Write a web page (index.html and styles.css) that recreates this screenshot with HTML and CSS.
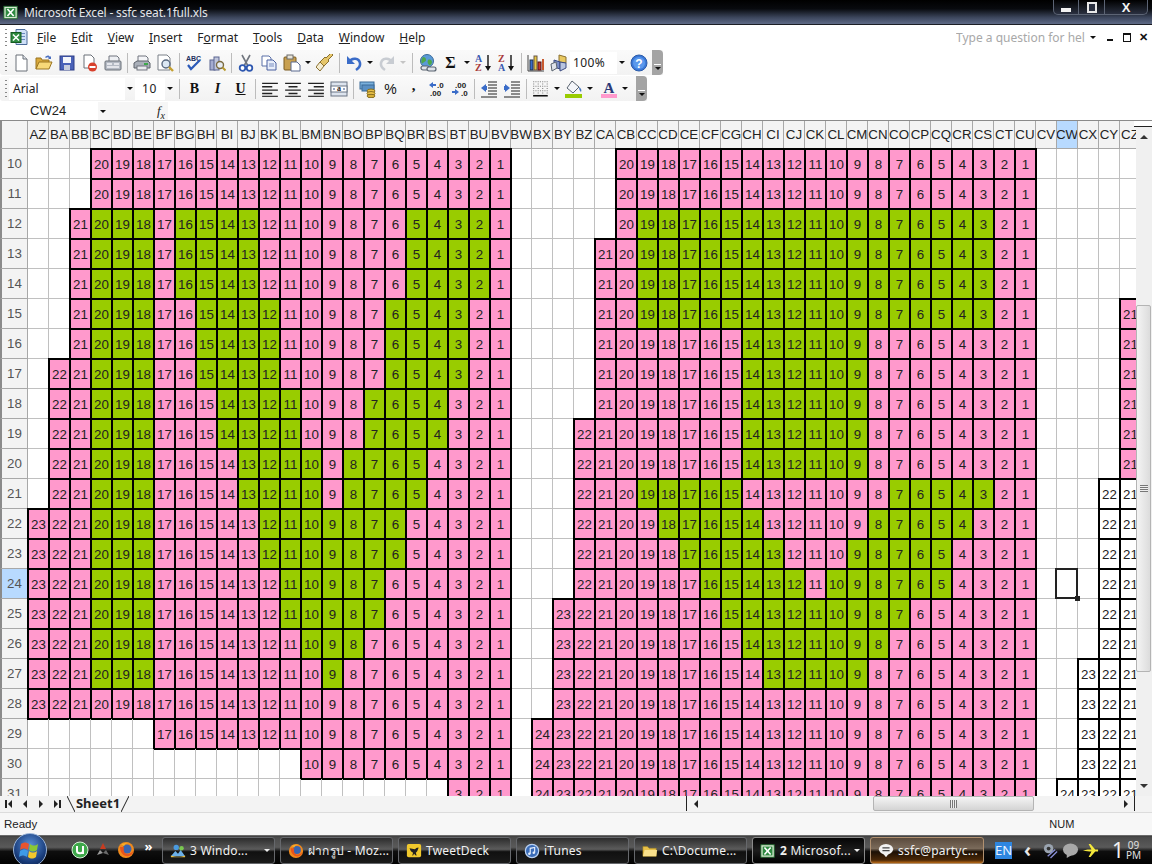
FILE: index.html
```html
<!DOCTYPE html>
<html lang="en">
<head>
<meta charset="utf-8">
<title>Microsoft Excel - ssfc seat.1full.xls</title>
<link rel="stylesheet" href="styles.css">
</head>
<body>
<svg class="sprite" xmlns="http://www.w3.org/2000/svg">
  <symbol id="i-new" viewBox="0 0 18 18"><path d="M4 1h7l4 4v12H4z" fill="#fff" stroke="#6a7078"/><path d="M11 1v4h4" fill="#dfe3ea" stroke="#6a7078"/></symbol>
  <symbol id="i-open" viewBox="0 0 18 18"><path d="M1 15V4h5l1 2h7v2" fill="#d9a93c" stroke="#9a7420"/><path d="M1 15l3-7h13l-3 7z" fill="#f8d878" stroke="#9a7420"/><path d="M10 3c2-2 4-2 5 0l1-1v3h-3l1-1c-1-1-2-1-3 0z" fill="#4a6fc0"/></symbol>
  <symbol id="i-save" viewBox="0 0 18 18"><rect x="2" y="2" width="14" height="14" fill="#4a62b8" stroke="#2c3c86"/><rect x="5" y="3" width="8" height="6" fill="#f4f6fb"/><rect x="6" y="11" width="6" height="5" fill="#c8cede"/></symbol>
  <symbol id="i-perm" viewBox="0 0 18 18"><path d="M3 1h7l3 3v10H3z" fill="#fff" stroke="#6a7078"/><circle cx="11.5" cy="13" r="4.5" fill="#d8402c"/><rect x="8.5" y="12" width="6" height="2" fill="#fff"/></symbol>
  <symbol id="i-mail" viewBox="0 0 18 18"><path d="M5 7V2h8l2 2v3" fill="#eef0f4" stroke="#70757e"/><rect x="1" y="7" width="16" height="9" rx="1" fill="#b4bac4" stroke="#6a7078"/><path d="M3 10h5M3 13h12M10 10h5" stroke="#f2f4f8" stroke-width="1.5"/></symbol>
  <symbol id="i-print" viewBox="0 0 18 18"><path d="M5 8V2h8l2 2v4" fill="#f4f5f8" stroke="#70757e"/><path d="M1 9l3-2h11l2 2v5H1z" fill="#aab0ba" stroke="#5a6068"/><rect x="4" y="12" width="10" height="4" fill="#e8eaee" stroke="#70757e"/><rect x="11" y="9" width="4" height="2" fill="#3da84a"/></symbol>
  <symbol id="i-preview" viewBox="0 0 18 18"><path d="M2 1h9l3 3v12H2z" fill="#fff" stroke="#7a8088"/><circle cx="10" cy="10" r="4" fill="#dce8f4" stroke="#5a6a80" stroke-width="1.4"/><path d="M13 13l4 4" stroke="#c4a030" stroke-width="2.4"/></symbol>
  <symbol id="i-spell" viewBox="0 0 18 18"><text x="1" y="7" class="svg-tiny">ABC</text><path d="M3 11l3 4 9-9" fill="none" stroke="#2c5ab8" stroke-width="2.2"/></symbol>
  <symbol id="i-research" viewBox="0 0 18 18"><rect x="2" y="6" width="5" height="10" fill="#a4acd0" stroke="#5a6490"/><rect x="6" y="3" width="5" height="13" fill="#c0c6dc" stroke="#5a6490"/><circle cx="12" cy="11" r="3.5" fill="#e6ecf4" stroke="#7a6a40" stroke-width="1.4"/><path d="M14.5 13.5l3 3" stroke="#b89a30" stroke-width="2"/></symbol>
  <symbol id="i-cut" viewBox="0 0 18 18"><path d="M5 1l6 11M13 1L7 12" stroke="#70757e" stroke-width="1.6" fill="none"/><circle cx="5.5" cy="14" r="2.8" fill="#fff" stroke="#2e58b0" stroke-width="1.8"/><circle cx="12.5" cy="14" r="2.8" fill="#fff" stroke="#2e58b0" stroke-width="1.8"/></symbol>
  <symbol id="i-copy" viewBox="0 0 18 18"><path d="M2 2h7l2 2v8H2z" fill="#fff" stroke="#5a70a8"/><path d="M7 6h6l3 3v7H7z" fill="#e8eefa" stroke="#4a60a0"/><path d="M9 10h5M9 12h5" stroke="#7a8ec0"/></symbol>
  <symbol id="i-paste" viewBox="0 0 18 18"><rect x="1" y="3" width="12" height="13" rx="1" fill="#c8a050" stroke="#7a5a20"/><rect x="4" y="1" width="6" height="4" fill="#e8e4d8" stroke="#6a6a6a"/><path d="M8 8h6l3 3v6H8z" fill="#fff" stroke="#5a6a90"/></symbol>
  <symbol id="i-painter" viewBox="0 0 18 18"><path d="M17 1l-5 5 1 1-5 5-4-4 5-5 1 1 5-5z" fill="#e6c66a" stroke="#8a7030"/><path d="M4 8l4 4-4 5-4-4z" fill="#f4ecd0" stroke="#8a7030"/></symbol>
  <symbol id="i-undo" viewBox="0 0 18 18"><path d="M4 8c3-5 10-4 11 1 .6 3-1 5-4 7" fill="none" stroke="#3a6cc8" stroke-width="2.6"/><path d="M2 2v8h8z" fill="#3a6cc8"/></symbol>
  <symbol id="i-redo" viewBox="0 0 18 18"><path d="M14 8c-3-5-10-4-11 1-.6 3 1 5 4 7" fill="none" stroke="#c8ccd2" stroke-width="2.6"/><path d="M16 2v8H8z" fill="#c8ccd2"/></symbol>
  <symbol id="i-link" viewBox="0 0 18 18"><circle cx="8" cy="7" r="6.5" fill="#5a9ad8" stroke="#3a6a98"/><path d="M4 3c2 0 3 1 3 3s-3 2-4 4c-1-2-1-5 1-7zM9 6c2-1 4 0 4 2s-2 4-3 3-2-3-1-5z" fill="#4ea84a"/><rect x="2" y="12" width="8" height="4" rx="2" fill="#dfe3ea" stroke="#5a6470" stroke-width="1.2"/><rect x="8" y="13" width="9" height="4" rx="2" fill="#dfe3ea" stroke="#5a6470" stroke-width="1.2"/></symbol>
  <symbol id="i-az" viewBox="0 0 18 18"><text x="0" y="8" class="svg-sort svg-blue">A</text><text x="0" y="17" class="svg-sort svg-red">Z</text><path d="M13 1v14" stroke="#111" stroke-width="1.4"/><path d="M10 12h6l-3 5z" fill="#111"/></symbol>
  <symbol id="i-za" viewBox="0 0 18 18"><text x="0" y="8" class="svg-sort svg-red">Z</text><text x="0" y="17" class="svg-sort svg-blue">A</text><path d="M13 1v14" stroke="#111" stroke-width="1.4"/><path d="M10 12h6l-3 5z" fill="#111"/></symbol>
  <symbol id="i-chart" viewBox="0 0 18 18"><path d="M1 1v16h16" fill="none" stroke="#444"/><rect x="3" y="6" width="3" height="10" fill="#3a6cc8" stroke="#234"/><rect x="7" y="2" width="3" height="14" fill="#e8c840" stroke="#654"/><rect x="11" y="8" width="3" height="8" fill="#c83a30" stroke="#511"/><rect x="15" y="5" width="2" height="11" fill="#c85a30"/></symbol>
  <symbol id="i-draw" viewBox="0 0 18 18"><path d="M9 1l7 2v6l-7-1z" fill="#e8c860" stroke="#8a7030"/><path d="M4 6l6 2v7l-6-2z" fill="#7a8ec8" stroke="#3a4a80"/><path d="M1 10l5-2 1 6-5 3z" fill="#dfe3ea" stroke="#5a6470"/><path d="M10 8l6 1v5l-6 3z" fill="#b8c4e0" stroke="#3a4a80"/></symbol>
  <symbol id="i-help" viewBox="0 0 18 18"><circle cx="9" cy="9" r="8" fill="#3a78d8" stroke="#2a5aa8"/><circle cx="9" cy="9" r="6" fill="#5a98ec"/><text x="9" y="13.5" class="svg-help">?</text></symbol>
  <symbol id="i-al" viewBox="0 0 16 16"><path d="M1 3h14M1 6h9M1 9h14M1 12h9" stroke="#222" stroke-width="1.2"/><path d="M1 14.5h14" stroke="#222"/></symbol>
  <symbol id="i-ac" viewBox="0 0 16 16"><path d="M1 3h14M4 6h8M1 9h14M4 12h8" stroke="#222" stroke-width="1.2"/><path d="M1 14.5h14" stroke="#222"/></symbol>
  <symbol id="i-ar" viewBox="0 0 16 16"><path d="M1 3h14M6 6h9M1 9h14M6 12h9" stroke="#222" stroke-width="1.2"/><path d="M1 14.5h14" stroke="#222"/></symbol>
  <symbol id="i-merge" viewBox="0 0 18 18"><rect x="1" y="2" width="16" height="14" fill="#dde4ee" stroke="#6a7484"/><rect x="1" y="6" width="16" height="6" fill="#fff" stroke="#6a7484"/><text x="9" y="11" class="svg-merge">a</text><path d="M3 9h2M13 9h2" stroke="#2c4a88"/></symbol>
  <symbol id="i-money" viewBox="0 0 18 18"><rect x="1" y="2" width="14" height="7" fill="#7ab0dc" stroke="#3a6a98"/><rect x="3" y="5" width="12" height="6" fill="#5a90c4" stroke="#3a6a98"/><ellipse cx="12" cy="11" rx="4" ry="2" fill="#e8c048" stroke="#8a7020"/><ellipse cx="12" cy="13.5" rx="4" ry="2" fill="#e8c048" stroke="#8a7020"/><ellipse cx="12" cy="16" rx="4" ry="1.7" fill="#d8b038" stroke="#8a7020"/></symbol>
  <symbol id="i-inc" viewBox="0 0 18 18"><path d="M1 5l4-3v2h3v2H5v2z" fill="#3a6cc8"/><text x="9" y="8" class="svg-tiny2">.0</text><text x="2" y="16" class="svg-tiny2">.00</text></symbol>
  <symbol id="i-dec" viewBox="0 0 18 18"><text x="4" y="8" class="svg-tiny2">.00</text><path d="M1 11h3V9l4 3-4 3v-2H1z" fill="#3a6cc8"/><text x="10" y="16" class="svg-tiny2">.0</text></symbol>
  <symbol id="i-out" viewBox="0 0 18 18"><path d="M8 2h9M8 5h9M8 8h9M8 11h9M8 14h9M1 17h16" stroke="#222" stroke-width="1.1"/><path d="M1 8l5-4v2h1v4H6v2z" fill="#3a6cc8"/></symbol>
  <symbol id="i-ind" viewBox="0 0 18 18"><path d="M8 2h9M8 5h9M8 8h9M8 11h9M8 14h9M1 17h16" stroke="#222" stroke-width="1.1"/><path d="M7 8L2 4v2H1v4h1v2z" fill="#3a6cc8"/></symbol>
  <symbol id="i-border" viewBox="0 0 16 16"><path d="M1.5 1v11M5.5 1v11M9.5 1v11M13.5 1v11M1 1.5h13M1 5.500h13M1 9.500h13" stroke="#888" stroke-dasharray="1 1" fill="none"/><path d="M1 14h13" stroke="#111" stroke-width="1.4"/></symbol>
  <symbol id="i-fill" viewBox="0 0 18 18"><path d="M7 1l7 6-6 6-6-5z" fill="#f4f6fa" stroke="#5a6470"/><path d="M14 7c2 1 3 3 2 5-1-1-2-2-2-5z" fill="#4a78c0"/><rect x="0" y="14" width="17" height="4" fill="#99cc00"/></symbol>
  <symbol id="i-color" viewBox="0 0 18 18"><text x="9" y="12.500" class="svg-a">A</text><rect x="1" y="14" width="16" height="4" fill="#ff99cc"/></symbol>
  <symbol id="i-xl" viewBox="0 0 18 18"><rect x="1" y="2" width="15" height="14" fill="#d6e8d0" stroke="#1e6a2c"/><rect x="3" y="4" width="11" height="10" fill="#2e8a40"/><path d="M5 5l7 8M12 5l-7 8" stroke="#fff" stroke-width="1.8"/></symbol>
  <symbol id="i-xldoc" viewBox="0 0 18 18"><path d="M6 1h9l2 2v13H6z" fill="#cfe0f8" stroke="#4a6a98"/><path d="M9 5h6M9 8h6M9 11h6" stroke="#6a8ac0"/><rect x="1" y="4" width="10" height="10" fill="#2e8a40" stroke="#155a22"/><path d="M3 6l6 6M9 6l-6 6" stroke="#fff" stroke-width="1.6"/></symbol>
  <symbol id="i-win" viewBox="0 0 24 24"><path d="M3 6c3-2 5-2 8 0l-1 6c-3-2-5-2-8 0z" fill="#e8542e"/><path d="M12 6c3 2 5 2 8 0l-1 6c-3 2-5 2-8 0z" fill="#8ac834"/><path d="M2 13c3-2 5-2 8 0l-1 6c-3-2-5-2-8 0z" fill="#3e9ae8"/><path d="M11 13c3 2 5 2 8 0l-1 6c-3 2-5 2-8 0z" fill="#f4c82c"/></symbol>
  <symbol id="i-ut" viewBox="0 0 18 18"><circle cx="9" cy="9" r="8" fill="#3ea84a" stroke="#d8f0d8"/><path d="M6 5v5c0 3 6 3 6 0V5M12 5v8" fill="none" stroke="#fff" stroke-width="2"/></symbol>
  <symbol id="i-aim" viewBox="0 0 18 18"><path d="M9 2l3 6h-6z" fill="#c83c20"/><path d="M3 14l3-5 3 3z" fill="#9a9a9a"/><path d="M15 14l-3-5-3 3z" fill="#6a6a6a"/></symbol>
  <symbol id="i-fx" viewBox="0 0 18 18"><circle cx="9" cy="9" r="8" fill="#f08a1c"/><circle cx="10" cy="8" r="4.500" fill="#3a64b0"/><path d="M3 6c0 6 4 10 9 9 3-1 4-3 4-5-2 3-6 4-8 2-2-2-1-5-1-6z" fill="#e8541c"/><path d="M4 3c2 0 5-2 8-1-3 0-4 1-5 3z" fill="#f6b02c"/></symbol>
  <symbol id="i-group" viewBox="0 0 18 18"><path d="M1 15l5-6 3 3 3-4 5 7z" fill="#6cb0e8"/><path d="M1 16h16v-2c-4 2-11 2-16 0z" fill="#e8c048"/><circle cx="7" cy="5" r="3" fill="#4a9ae0"/><circle cx="13" cy="6" r="2.500" fill="#7ac850"/></symbol>
  <symbol id="i-tweet" viewBox="0 0 18 18"><rect x="1" y="1" width="16" height="15" rx="2" fill="#f0c82c"/><path d="M14 5c-2 0-3 1-4 2L4 6c1 3 2 4 4 5l-1 3h1l1-2 2 2h1l-1-3c2-1 2-3 3-5z" fill="#222"/></symbol>
  <symbol id="i-tunes" viewBox="0 0 18 18"><circle cx="9" cy="9" r="7.500" fill="#3a6cb8" stroke="#b8d0f0" stroke-width="1.4"/><path d="M7 12V6l5-1v6" fill="none" stroke="#e4eefc" stroke-width="1.3"/><circle cx="6" cy="12" r="1.400" fill="#e4eefc"/><circle cx="11" cy="11" r="1.400" fill="#e4eefc"/></symbol>
  <symbol id="i-folder" viewBox="0 0 18 18"><path d="M1 15V4h5l2 2h8v9z" fill="#e8c048" stroke="#9a8020" stroke-width=".6"/><path d="M1 15l2-7h14l-1 7z" fill="#f8e08c"/></symbol>
  <symbol id="i-chat" viewBox="0 0 18 18"><ellipse cx="9" cy="7" rx="8" ry="6" fill="#f2f2f2"/><path d="M6 12l3 4 3-4z" fill="#f2f2f2"/><path d="M5 5.500h8M5 8.500h8" stroke="#444" stroke-width="1.400"/></symbol>
  <symbol id="i-vol" viewBox="0 0 18 18"><circle cx="7" cy="7" r="5" fill="#9aa4b0"/><circle cx="7" cy="7" r="2" fill="#333"/><path d="M6 15l8-7M9 17l7-7" stroke="#8a90d8" stroke-width="1.400"/></symbol>
  <symbol id="i-bubble" viewBox="0 0 18 18"><ellipse cx="9" cy="8" rx="8" ry="6.500" fill="#a8a8a8"/><path d="M5 12v5l5-3z" fill="#a8a8a8"/></symbol>
  <symbol id="i-plane" viewBox="0 0 18 18"><path d="M1 9c4-1 6-1 9-1l-3-6h2l5 6h3v2h-3l-5 6H7l3-6c-3 0-5 0-9-1z" fill="#f4e83c"/></symbol>
</svg>

<div class="app">
  <header class="titlebar">
    <svg class="ico-title"><use href="#i-xl"/></svg>
    <span class="title-text">Microsoft Excel - ssfc seat.1full.xls</span>
    <div class="wincontrols">
      <span class="winbtn winbtn-min"><i class="min-glyph"></i></span>
      <span class="winbtn winbtn-max"><i class="max-glyph"></i></span>
      <span class="winbtn winbtn-close">X</span>
    </div>
  </header>

  <nav class="menubar">
    <span class="grip"></span>
    <svg class="ico-menu"><use href="#i-xldoc"/></svg>
    <ul class="menu">
      <li><u>F</u>ile</li><li><u>E</u>dit</li><li><u>V</u>iew</li><li><u>I</u>nsert</li><li>F<u>o</u>rmat</li><li><u>T</u>ools</li><li><u>D</u>ata</li><li><u>W</u>indow</li><li><u>H</u>elp</li>
    </ul>
    <span class="askbox">Type a question for help</span>
    <span class="arr arr-ask"></span>
    <span class="mdi mdi-min"></span>
    <span class="mdi mdi-restore"><i></i></span>
    <span class="mdi mdi-close">✕</span>
  </nav>

  <div class="toolbar">
    <span class="grip"></span>
    <span class="btn"><svg class="ico"><use href="#i-new"/></svg></span>
    <span class="btn"><svg class="ico"><use href="#i-open"/></svg></span>
    <span class="btn"><svg class="ico"><use href="#i-save"/></svg></span>
    <span class="btn"><svg class="ico"><use href="#i-perm"/></svg></span>
    <span class="btn"><svg class="ico"><use href="#i-mail"/></svg></span>
    <span class="sep"></span>
    <span class="btn"><svg class="ico"><use href="#i-print"/></svg></span>
    <span class="btn"><svg class="ico"><use href="#i-preview"/></svg></span>
    <span class="sep"></span>
    <span class="btn"><svg class="ico"><use href="#i-spell"/></svg></span>
    <span class="btn"><svg class="ico"><use href="#i-research"/></svg></span>
    <span class="sep"></span>
    <span class="btn"><svg class="ico"><use href="#i-cut"/></svg></span>
    <span class="btn"><svg class="ico"><use href="#i-copy"/></svg></span>
    <span class="btn"><svg class="ico"><use href="#i-paste"/></svg></span>
    <span class="arr"></span>
    <span class="btn"><svg class="ico"><use href="#i-painter"/></svg></span>
    <span class="sep"></span>
    <span class="btn"><svg class="ico"><use href="#i-undo"/></svg></span>
    <span class="arr"></span>
    <span class="btn"><svg class="ico"><use href="#i-redo"/></svg></span>
    <span class="arr arr-off"></span>
    <span class="sep sep-wide"></span>
    <span class="btn"><svg class="ico"><use href="#i-link"/></svg></span>
    <span class="btn btn-sigma">Σ</span>
    <span class="arr"></span>
    <span class="btn"><svg class="ico"><use href="#i-az"/></svg></span>
    <span class="btn"><svg class="ico"><use href="#i-za"/></svg></span>
    <span class="sep"></span>
    <span class="btn"><svg class="ico"><use href="#i-chart"/></svg></span>
    <span class="btn"><svg class="ico"><use href="#i-draw"/></svg></span>
    <span class="combo combo-zoom">100%</span>
    <span class="arr"></span>
    <span class="btn"><svg class="ico"><use href="#i-help"/></svg></span>
    <span class="tb-end"><i></i></span>
  </div>

  <div class="toolbar">
    <span class="grip"></span>
    <span class="combo combo-font">Arial</span>
    <span class="arr"></span>
    <span class="combo combo-size">10</span>
    <span class="arr"></span>
    <span class="sep sep-wide"></span>
    <span class="btn btn-b">B</span>
    <span class="btn btn-i">I</span>
    <span class="btn btn-u">U</span>
    <span class="sep"></span>
    <span class="btn"><svg class="ico"><use href="#i-al"/></svg></span>
    <span class="btn"><svg class="ico"><use href="#i-ac"/></svg></span>
    <span class="btn"><svg class="ico"><use href="#i-ar"/></svg></span>
    <span class="btn"><svg class="ico"><use href="#i-merge"/></svg></span>
    <span class="sep"></span>
    <span class="btn"><svg class="ico"><use href="#i-money"/></svg></span>
    <span class="btn btn-pct">%</span>
    <span class="btn btn-comma">,</span>
    <span class="btn"><svg class="ico"><use href="#i-inc"/></svg></span>
    <span class="btn"><svg class="ico"><use href="#i-dec"/></svg></span>
    <span class="sep"></span>
    <span class="btn"><svg class="ico"><use href="#i-out"/></svg></span>
    <span class="btn"><svg class="ico"><use href="#i-ind"/></svg></span>
    <span class="sep"></span>
    <span class="btn"><svg class="ico"><use href="#i-border"/></svg></span>
    <span class="arr"></span>
    <span class="btn"><svg class="ico"><use href="#i-fill"/></svg></span>
    <span class="arr"></span>
    <span class="btn btn-shift"><svg class="ico"><use href="#i-color"/></svg></span>
    <span class="arr"></span>
    <span class="tb-end tb-end-tight"><i></i></span>
  </div>

  <div class="formulabar">
    <span class="namebox">CW24</span>
    <span class="arr arr-name"></span>
    <span class="fx">f<sub>x</sub></span>
    <span class="formula-input"></span>
  </div>

  <main class="sheet">
    <div class="grid" id="grid"></div>
    <aside class="vscroll">
      <span class="sb-cap"></span>
      <span class="sb-arrow"><i class="tri tri-up"></i></span>
      <span class="sb-gap"></span>
      <span class="sb-thumb"><i class="grip-h"></i></span>
      <span class="sb-rest"></span>
      <span class="sb-arrow"><i class="tri tri-down"></i></span>
    </aside>
  </main>

  <div class="tabbar">
    <div class="tabnav">
      <span class="tabnav-btn"><i class="bar"></i><i class="tri tri-left"></i></span>
      <span class="tabnav-btn"><i class="tri tri-left"></i></span>
      <span class="tabnav-btn"><i class="tri tri-right"></i></span>
      <span class="tabnav-btn"><i class="tri tri-right"></i><i class="bar"></i></span>
    </div>
    <div class="tab">
      <svg class="tab-slant"><path d="M0 0l8 16" stroke="#222" fill="none"/></svg>
      <span class="tab-name">Sheet1</span>
      <svg class="tab-slant"><path d="M8 0l-8 16" stroke="#222" fill="none"/></svg>
    </div>
    <div class="hscroll">
      <span class="hs-arrow"><i class="tri tri-left"></i></span>
      <span class="hs-gap"></span>
      <span class="hs-thumb"><i class="grip-v"></i></span>
      <span class="hs-rest"></span>
      <span class="hs-arrow"><i class="tri tri-right"></i></span>
    </div>
  </div>

  <div class="statusbar">
    <span>Ready</span>
    <span class="status-num">NUM</span>
  </div>

  <footer class="taskbar">
    <div class="start"><span class="orb"><svg class="orb-flag"><use href="#i-win"/></svg></span></div>
    <div class="quick">
      <span class="ql"><svg class="ico"><use href="#i-ut"/></svg></span>
      <span class="ql"><svg class="ico"><use href="#i-aim"/></svg></span>
      <span class="ql"><svg class="ico"><use href="#i-fx"/></svg></span>
      <span class="ql ql-more">»</span>
    </div>
    <div class="tasks">
      <div class="task"><svg class="ico-task"><use href="#i-group"/></svg><span class="task-label">3 Windo...</span><i class="tri tri-white"></i></div>
      <div class="task"><svg class="ico-task"><use href="#i-fx"/></svg><span class="task-label">ฝากรูป - Moz...</span></div>
      <div class="task"><svg class="ico-task"><use href="#i-tweet"/></svg><span class="task-label">TweetDeck</span></div>
      <div class="task"><svg class="ico-task"><use href="#i-tunes"/></svg><span class="task-label">iTunes</span></div>
      <div class="task"><svg class="ico-task"><use href="#i-folder"/></svg><span class="task-label">C:\Docume...</span></div>
      <div class="task task-active"><svg class="ico-task"><use href="#i-xl"/></svg><span class="task-label"><b>2</b> Microsof...</span><i class="tri tri-white"></i></div>
      <div class="task task-flash"><svg class="ico-task"><use href="#i-chat"/></svg><span class="task-label">ssfc@partyc...</span></div>
    </div>
    <div class="tray">
      <span class="lang">EN</span>
      <span class="tray-chev">‹</span>
      <svg class="ico-tray"><use href="#i-vol"/></svg>
      <svg class="ico-tray"><use href="#i-bubble"/></svg>
      <svg class="ico-tray"><use href="#i-plane"/></svg>
      <div class="clock"><span class="clock-h">1</span><span class="clock-rest"><span>09</span><span>PM</span></span></div>
    </div>
  </footer>
</div>
<script src="grid.js"></script>
</body>
</html>
```
FILE: styles.css
```css
* { box-sizing: border-box; }
html, body { margin: 0; padding: 0; }
body { width: 1152px; height: 864px; overflow: hidden; background: #fff; font-family: "Liberation Sans", Arial, sans-serif; }
.sprite { display: none; }
.app { display: flex; flex-direction: column; width: 1152px; height: 864px; }
i { display: block; font-style: normal; }

.svg-tiny { font: bold 7px "Liberation Sans", sans-serif; fill: #223060; }
.svg-tiny2 { font: bold 8px "Liberation Sans", sans-serif; fill: #222; }
.svg-sort { font: bold 10px "Liberation Serif", serif; }
.svg-blue { fill: #3a5ab0; }
.svg-red { fill: #a83a3a; }
.svg-help { font: bold 12px "Liberation Sans", sans-serif; fill: #fff; text-anchor: middle; }
.svg-merge { font: bold 8px "Liberation Serif", serif; fill: #222; text-anchor: middle; }
.svg-a { font: bold 15px "Liberation Serif", serif; fill: #2c3a78; text-anchor: middle; }

/* title bar */
.titlebar { flex: 0 0 25px; display: flex; align-items: center; padding-left: 3px; position: relative; background: linear-gradient(#000 0, #080a0e 35%, #3c465c 70%, #5e6a86 96%, #1c1e24 96%); }
.ico-title { width: 16px; height: 17px; flex: none; }
.title-text { margin-left: 5px; color: #e4e6ea; font: 12px "Noto Sans", sans-serif; letter-spacing: -.15px; white-space: nowrap; }
.wincontrols { display: flex; margin-left: auto; margin-right: 4px; align-self: flex-start; height: 15px; border: 1px solid #5c6474; border-top: 0; border-radius: 0 0 5px 5px; background: linear-gradient(#000, #2a3040); }
.winbtn { display: flex; align-items: center; justify-content: center; color: #f2f2f2; border-right: 1px solid #5c6474; font: bold 13px "Liberation Sans", sans-serif; }
.winbtn:last-child { border-right: 0; }
.winbtn-min { width: 25px; }
.winbtn-max { width: 26px; }
.winbtn-close { width: 42px; }
.min-glyph { width: 10px; height: 4px; margin-top: 5px; background: #f2f2f2; }
.max-glyph { width: 10px; height: 11px; border: 2px solid #e8e8e8; background: #2a3040; }

/* menu */
.menubar { flex: 0 0 25px; display: flex; align-items: center; background: #fff; position: relative; }
.grip { flex: none; width: 5px; height: 18px; margin-left: 4px; background: repeating-linear-gradient(#888 0 1px, transparent 1px 4px); background-size: 2px 100%; background-repeat: no-repeat; background-position: 1px 0; }
.ico-menu { width: 18px; height: 19px; margin-left: 1px; flex: none; }
.menu { list-style: none; display: flex; gap: 15px; margin: 0 0 0 9px; padding: 0; font: 12px "Noto Sans", sans-serif; color: #222; flex: 1; }
.askbox { width: 129px; overflow: hidden; white-space: nowrap; color: #a8a8a8; font: 12px "Noto Sans", sans-serif; }
.arr-ask { margin-left: 3px; }
.mdi { flex: none; width: 17px; text-align: center; color: #111; font-size: 11px; }
.mdi-min::before { content: ""; display: block; width: 6px; height: 2px; margin: 8px auto 0; background: #111; }
.mdi-min { height: 14px; margin-left: 3px; }
.mdi-restore { display: flex; justify-content: center; }
.mdi-restore i { width: 8px; height: 9px; border: 1px solid #111; border-top-width: 2px; }
.mdi-close { font-weight: bold; margin-right: 0; }

/* toolbars */
.toolbar { flex: 0 0 25px; display: flex; align-items: center; width: max-content; margin-bottom: 1px; background: linear-gradient(#fafafa, #f2f2f2); border-radius: 3px 0 0 3px; }
.btn { flex: none; width: 23px; height: 22px; display: flex; align-items: center; justify-content: center; color: #111; }
.ico { width: 18px; height: 18px; display: block; }
.arr { flex: none; width: 10px; height: 22px; display: flex; align-items: center; justify-content: center; }
.arr::before { content: ""; border-left: 3px solid transparent; border-right: 3px solid transparent; border-top: 3px solid #111; }
.arr-off::before { border-top-color: #c4c4c4; }
.sep { flex: none; width: 6px; height: 20px; background: linear-gradient(#bcbcbc, #bcbcbc) center / 1px 100% no-repeat; }
.sep-wide { width: 8px; }
.combo { flex: none; height: 22px; display: flex; align-items: center; background: #fff; color: #222; font: 12px "Noto Sans", sans-serif; }
.combo-zoom { width: 47px; padding-left: 3px; letter-spacing: .4px; }
.combo-font { width: 116px; padding-left: 4px; }
.combo-size { width: 30px; padding-left: 7px; letter-spacing: .6px; }
.btn-sigma { font: bold 16px "Liberation Serif", serif; }
.btn-b { font: bold 14px "Liberation Serif", serif; }
.btn-i { font: italic bold 14px "Liberation Serif", serif; }
.btn-u { font: bold 14px "Liberation Serif", serif; text-decoration: underline; }
.btn-pct { font: 14px "Liberation Sans", sans-serif; }
.btn-comma { font: bold 15px "Liberation Serif", serif; padding-bottom: 6px; }
.btn-shift { margin-left: 2px; }
.tb-end { flex: none; width: 11px; height: 25px; margin-left: 2px; border-radius: 0 4px 4px 0; background: #a4a4a4; display: flex; flex-direction: column; align-items: center; justify-content: flex-end; padding-bottom: 4px; }
.tb-end-tight { margin-left: 6px; }
.tb-end i { width: 7px; height: 7px; border-top: 1px solid #fff; }
.tb-end i::after { content: ""; display: block; margin: 2px auto 0; width: 0; border-left: 3px solid transparent; border-right: 3px solid transparent; border-top: 3px solid #111; }

/* formula bar */
.formulabar { flex: 0 0 18px; display: flex; align-items: stretch; background: #f6f6f6; }
.namebox { flex: none; width: 98px; padding-left: 30px; background: #fff; color: #222; font-size: 13px; line-height: 18px; }
.arr-name { height: 18px; width: 10px; margin-left: 0; }
.fx { flex: none; width: 60px; text-align: right; padding-right: 3px; font: italic 13px/18px "Liberation Serif", serif; color: #222; }
.fx sub { font-size: 10px; line-height: 0; }
.formula-input { flex: 1; background: #fff; }

/* sheet */
.sheet { flex: 1; display: flex; min-height: 0; border-top: 1px solid #8a8a8a; }
.grid { flex: none; width: 1136px; overflow: hidden; display: grid; grid-template-columns: 28px repeat(53, 21px); grid-auto-rows: 30px; grid-template-rows: 28px; align-content: start; background: #fff; }
.head { display: flex; align-items: center; justify-content: center; white-space: nowrap; overflow: hidden; background: #f3f3f3; color: #222; font-size: 13.33px; border-right: 1px solid #a8a8a8; border-bottom: 1px solid #a8a8a8; }
.head-row { color: #555; border-left: 2px solid #8a8a8a; font-size: 13.33px; }
.head-corner { border-left: 2px solid #8a8a8a; }
.head-on { background: #b8daff; }
.cell { display: flex; align-items: center; justify-content: center; color: #222; font-size: 13.33px; border-right: 1px solid #c0c0c0; border-bottom: 1px solid #c0c0c0; min-width: 0; position: relative; }
.seat { border: 0; box-shadow: inset 0 0 0 1px #000, 0 0 0 1px #000; }
.pink { background: #ff99cc; }
.green { background: #99cc00; }
.plain { background: #fff; }
.selected::after { content: ""; box-sizing: border-box; position: absolute; left: -2px; top: -1px; width: 23px; height: 31px; border: 2px solid #222; pointer-events: none; z-index: 2; }
.selected::before { content: ""; box-sizing: border-box; position: absolute; right: -3px; bottom: -3px; width: 5px; height: 5px; background: #222; z-index: 3; }

/* scrollbars */
.vscroll { flex: 1; display: flex; flex-direction: column; background: #f0f0f0; }
.sb-cap { flex: 0 0 6px; background: #fff; border-bottom: 1px solid #222; margin-left: -2px; }
.sb-arrow { flex: 0 0 20px; display: flex; align-items: center; justify-content: center; }
.sb-gap { flex: 0 0 158px; }
.sb-thumb { flex: 0 0 367px; margin-right: 1px; border: 1px solid #b4b4b4; border-radius: 2px; background: linear-gradient(90deg, #f4f4f4, #dcdcdc); display: flex; align-items: center; justify-content: center; }
.sb-rest { flex: 1; }
.tri { width: 0; height: 0; }
.tri-up { border-left: 4px solid transparent; border-right: 4px solid transparent; border-bottom: 4px solid #333; }
.tri-down { border-left: 4px solid transparent; border-right: 4px solid transparent; border-top: 4px solid #333; }
.tri-left { border-top: 4px solid transparent; border-bottom: 4px solid transparent; border-right: 4px solid #222; }
.tri-right { border-top: 4px solid transparent; border-bottom: 4px solid transparent; border-left: 4px solid #222; }
.tri-white { margin-left: auto; margin-right: 4px; flex: none; border-left: 3px solid transparent; border-right: 3px solid transparent; border-top: 3px solid #eee; }
.grip-h { width: 8px; height: 7px; background: repeating-linear-gradient(#777 0 1px, #eee 1px 2px); }
.grip-v { width: 7px; height: 8px; background: repeating-linear-gradient(90deg, #777 0 1px, #eee 1px 2px); }

/* tabs */
.tabbar { flex: 0 0 16px; display: flex; align-items: stretch; background: #f3f3f3; border-bottom: 1px solid #dcdcdc; position: relative; }
.tabnav { flex: none; display: flex; width: 67px; }
.tabnav-btn { flex: 0 0 16.500px; display: flex; align-items: center; justify-content: center; gap: 1px; }
.bar { width: 2px; height: 8px; background: #222; }
.tab { flex: none; display: flex; width: 62px; height: 16px; }
.tab-slant { width: 8px; height: 16px; flex: none; }
.tab-name { width: 46px; text-align: center; font: bold 13px/15px "Noto Sans", sans-serif; color: #222; }
.hscroll { flex: none; display: flex; width: 449px; margin-left: 557px; height: 15px; border-left: 1px solid #222; border-right: 1px solid #222; }
.hs-arrow { flex: 0 0 17px; display: flex; align-items: center; justify-content: center; }
.hs-gap { flex: 0 0 169px; }
.hs-thumb { flex: 0 0 161px; border: 1px solid #b4b4b4; border-radius: 2px; background: linear-gradient(#f4f4f4, #d4d4d4); display: flex; align-items: center; justify-content: center; }
.hs-rest { flex: 1; }

/* status */
.statusbar { flex: 0 0 22px; display: flex; align-items: center; padding-left: 4px; background: #f7f7f7; color: #222; font-size: 11.5px; }
.status-num { margin-left: 1012px; font-size: 11px; }

/* taskbar */
.taskbar { flex: 0 0 29px; display: flex; align-items: stretch; position: relative; background: linear-gradient(#3c3c3c 0, #4a4a4a 4%, #5a5a5a 40%, #0e0e0e 55%, #020202); border-top: 1px solid #6a6a6a; }
.start { flex: 0 0 60px; position: relative; }
.orb { position: absolute; left: 13px; top: -3px; width: 34px; height: 34px; border-radius: 50%; background: radial-gradient(circle at 50% 35%, #5a90d8, #173a78 65%, #0a1a38); border: 1px solid #9ab4d8; display: flex; align-items: center; justify-content: center; }
.orb-flag { width: 24px; height: 24px; }
.quick { flex: 0 0 102px; display: flex; padding-left: 8px; align-items: center; }
.ql { flex: 0 0 23px; display: flex; justify-content: center; }
.ql-more { color: #fff; font: bold 13px "Noto Sans", sans-serif; margin-top: -8px; }
.tasks { flex: none; display: flex; gap: 5px; width: 823px; }
.task { flex: 0 0 113px; min-width: 0; overflow: hidden; display: flex; align-items: center; padding-left: 8px; border: 1px solid #66686c; border-radius: 3px; height: 27px; margin-top: 1px; background: linear-gradient(#2c2c2c, #5c5c5c 45%, #101010 55%, #1a1a1a); color: #f0f0f0; font: 12px "Noto Sans", "DejaVu Sans", sans-serif; white-space: nowrap; }
.ico-task { width: 16px; height: 16px; flex: none; margin-right: 4px; margin-left: -1px; }
.task-label { letter-spacing: .2px; }
.task-active { background: linear-gradient(#050505, #1c1c1c 50%, #000); border-color: #8a8a8a; }
.task-flash { flex-basis: 114px; background: linear-gradient(#5a4a3c, #7a6a5a 42%, #1c1005 55%, #4a2808 88%, #b86814); border-color: #b09070; }
.tray { flex: 1; display: flex; align-items: center; padding-left: 10px; color: #fff; }
.lang { flex: none; width: 17px; height: 17px; background: #2e86e0; font: 13px/17px "Noto Sans", sans-serif; text-align: center; color: #e8f2ff; }
.tray-chev { flex: none; width: 12px; margin-left: 12px; font: bold 19px/19px "Noto Sans", sans-serif; color: #e8e8e8; }
.ico-tray { flex: none; width: 17px; height: 17px; margin-left: 3px; }
.ico-tray:first-of-type { margin-left: 6px; }
.clock { flex: none; display: flex; align-items: center; margin-left: 13px; }
.clock-h { font: 21px "Noto Sans", sans-serif; color: #f0f0f0; margin-right: 2px; }
.clock-rest { display: flex; flex-direction: column; font: 10px/10px "Noto Sans", sans-serif; color: #e0e0e0; align-items: center; }
```
FILE: grid.js
```js
// Seat plan: [row, left block first seat, right block first seat, far block first seat, left greens, right greens]
var PLAN = [
  [10, 20, 20, 0, [], []],
  [11, 20, 20, 0, [], []],
  [12, 21, 20, 0, [[20,18],[16,13],[5,2]], [[19,3]]],
  [13, 21, 21, 0, [[20,18],[16,13],[5,2]], [[19,3]]],
  [14, 21, 21, 0, [[20,18],[16,13],[5,2]], [[19,3]]],
  [15, 21, 21, 21, [[20,18],[15,12],[6,3]], [[19,3]]],
  [16, 21, 21, 21, [[20,18],[15,12],[6,3]], [[14,9]]],
  [17, 22, 21, 21, [[20,18],[15,12],[6,3]], [[14,9]]],
  [18, 22, 21, 21, [[20,18],[14,11],[7,4]], [[14,9]]],
  [19, 22, 22, 21, [[20,18],[14,11],[7,4]], [[14,9]]],
  [20, 22, 22, 21, [[20,18],[13,10],[8,5]], [[14,9]]],
  [21, 22, 22, 22, [[20,18],[13,10],[8,5]], [[19,15],[7,3]]],
  [22, 23, 22, 22, [[20,18],[12,6]], [[18,14],[8,4]]],
  [23, 23, 22, 22, [[20,18],[12,6]], [[17,13],[9,5]]],
  [24, 23, 22, 22, [[20,18],[11,7]], [[16,12],[10,5]]],
  [25, 23, 23, 22, [[20,18],[11,7]], [[15,7]]],
  [26, 23, 23, 22, [[20,18],[10,8]], [[14,8]]],
  [27, 23, 23, 23, [[20,18],[9,9]], [[13,9]]],
  [28, 23, 23, 23, [], []],
  [29, 17, 24, 23, [], []],
  [30, 10, 24, 23, [], []],
  [31, 3, 24, 24, [], []]
];

var COLS = ["AZ"];
"BC".split("").forEach(function (a) {
  "ABCDEFGHIJKLMNOPQRSTUVWXYZ".split("").forEach(function (b) { COLS.push(a + b); });
});

var grid = document.getElementById("grid");

function add(cls, text) {
  var el = document.createElement("div");
  el.className = cls;
  if (text !== undefined) el.textContent = text;
  grid.appendChild(el);
  return el;
}

function inSpans(n, spans) {
  return spans.some(function (s) { return n <= s[0] && n >= s[1]; });
}

add("head head-corner");
COLS.forEach(function (c) { add("head" + (c === "CW" ? " head-on" : ""), c); });

PLAN.forEach(function (p) {
  var row = p[0];
  add("head head-row" + (row === 24 ? " head-on" : ""), row);
  COLS.forEach(function (c, i) {
    var n = 0, fill = "pink";
    if (i <= 22) {
      n = 23 - i;
      if (n > p[1]) n = 0;
      else if (inSpans(n, p[4])) fill = "green";
    } else if (i >= 24 && i <= 47) {
      n = 48 - i;
      if (n > p[2]) n = 0;
      else if (inSpans(n, p[5])) fill = "green";
    } else if (i >= 49 && p[3]) {
      n = 73 - i;
      if (n > p[3]) n = 0;
      else if (row > 20) fill = "plain";
    }
    if (n) add("cell seat " + fill, n);
    else add("cell" + (c === "CW" && row === 24 ? " selected" : ""));
  });
});
```
